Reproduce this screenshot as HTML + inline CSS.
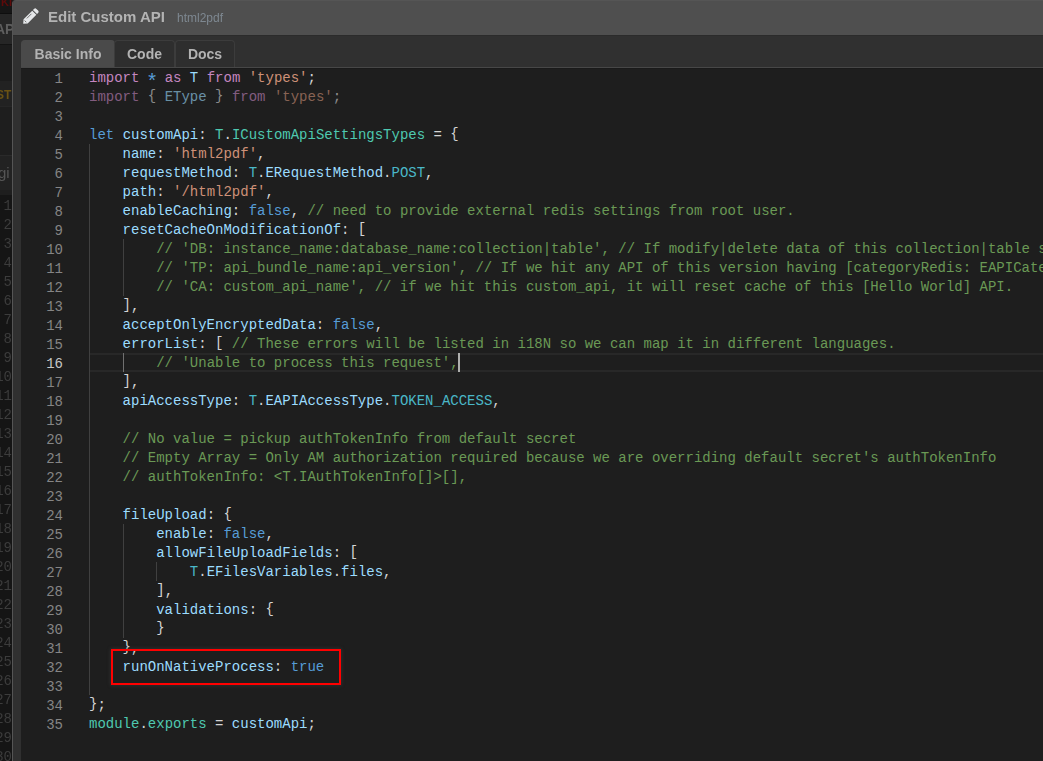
<!DOCTYPE html>
<html><head><meta charset="utf-8">
<style>
html,body{margin:0;padding:0;}
body{width:1043px;height:761px;overflow:hidden;position:relative;background:#1c1c1c;font-family:"Liberation Sans",sans-serif;}
#bg{position:absolute;left:0;top:0;width:12px;height:761px;background:#1c1c1c;overflow:hidden;filter:blur(0.4px);}
#bg div{position:absolute;left:0;width:12px;}
#bg .bln{font-family:"Liberation Mono",monospace;font-size:14px;line-height:19px;white-space:pre;color:#3c3c3c;text-align:right;width:12px;}
#modal{position:absolute;left:12px;top:0;width:1031px;height:761px;background:#303030;border-left:1px solid #555555;box-sizing:border-box;border-top-left-radius:4px;overflow:hidden;}
#hdr{position:absolute;left:0;top:0;right:0;height:35px;background:#4f4f4f;border-bottom:1px solid #2b2b2b;box-shadow:inset 0 1px 0 #555555;will-change:transform;}
#title{position:absolute;left:35px;top:8px;font-size:15px;font-weight:bold;color:#b3b3b3;white-space:nowrap;}
#sub{position:absolute;left:164px;top:11px;font-size:12px;color:#7e8891;white-space:nowrap;}
#pencil{position:absolute;left:-13px;top:0;}
.tab{position:absolute;top:40px;height:28px;box-sizing:border-box;border:1px solid #3c3c3c;border-bottom:none;border-radius:4px 4px 0 0;background:#2e2e2e;color:#b3b3b3;font-size:14px;font-weight:bold;text-align:center;line-height:27px;will-change:transform;}
#tbline{position:absolute;left:8px;right:0;top:67px;height:1px;background:#474747;}
#editor{position:absolute;left:8px;top:68px;right:0;bottom:0;background:#1e1e1e;overflow:hidden;}
#editor .shade{position:absolute;left:0;right:0;top:0;height:1px;background:#1a1a1a;}
.ln{position:absolute;left:0;top:2px;width:42px;text-align:right;color:#858585;}
.code{font-family:"Liberation Mono",monospace;font-size:14px;line-height:19px;white-space:pre;}
.row{position:absolute;left:0;right:0;height:19px;}
.tx{position:absolute;left:68px;top:1px;color:#d4d4d4;}
.dim .tx{opacity:.6}
.cur .hl{position:absolute;left:69px;right:0;top:0;height:19px;box-sizing:border-box;border-top:2px solid #282828;border-bottom:2px solid #282828;}
.cur .ln{color:#c6c6c6}
.g{position:absolute;width:1px;background:#404040;}
.ga{background:#707070;}
#caret{position:absolute;left:437px;top:285px;width:2px;height:19px;background:#aeafad;}
#redbox{position:absolute;left:90px;top:581px;width:230px;height:36px;box-sizing:border-box;border:2px solid #ff0000;box-shadow:0 0 3px 1px rgba(70,70,70,.35);}
.br{position:relative;top:-1px}
.k{color:#c586c0}.s{color:#ce9178}.b{color:#569cd6}.v{color:#9cdcfe}.t{color:#4ec9b0}.c{color:#6a9955}.e{color:#4fc1ff}.n{color:#4ab8c8}.a{color:#569cd6;display:inline-block;transform-origin:50% 4.4px;transform:translateY(2.5px) scale(1.45);}.p{color:#d4d4d4}
</style></head><body>
<div id="bg">
  <div style="top:0;height:13px;background:#161616;"></div>
  <div style="top:-5px;left:1px;width:30px;font-size:11px;font-weight:bold;color:#5e0a0a;line-height:14px;">KI</div>
  <div style="top:13px;height:1px;background:#0e0e0e;"></div>
  <div style="top:14px;height:30px;background:#262626;"></div>
  <div style="top:22px;left:-5px;width:30px;font-size:14px;font-weight:bold;color:#5e5e5e;line-height:14px;">AP</div>
  <div style="top:44px;height:1px;background:#141414;"></div>
  <div style="top:45px;height:36px;background:#1c1c1c;"></div>
  <div style="top:81px;height:25px;background:#222222;"></div>
  <div style="top:89px;left:-4px;width:30px;font-size:12px;font-weight:bold;color:#6a5214;line-height:12px;">ST</div>
  <div style="top:106px;height:49px;background:#1e1e1e;"></div>
  <div style="top:106px;height:1px;background:#262626;"></div>
  <div style="top:155px;height:1px;background:#2a2a2a;"></div>
  <div style="top:156px;height:34px;background:#222222;"></div>
  <div style="top:163px;left:-2px;width:30px;font-size:15px;color:#555555;line-height:20px;">gi</div>
  <div style="top:190px;height:5px;background:#1e1e1e;"></div>
  <div style="top:195px;height:566px;background:#151515;"></div>
  <div class="bln" style="top:197px;left:-6px;width:18px;">1
2
3
4
5
6
7
8
9
10
11
12
13
14
15
16
17
18
19
20
21
22
23
24
25
26
27
28
29
30</div>
</div>
<div id="modal">
  <div id="hdr">
    <svg id="pencil" width="60" height="35" viewBox="0 0 60 35"><g transform="translate(23.2,23.8) rotate(-45)"><path d="M0 0 L3.4 -2.9 L15.7 -2.9 L15.7 2.9 L3.4 2.9 Z M16.6 -2.9 L18.2 -2.9 Q19.9 -2.9 19.9 -1.2 L19.9 1.2 Q19.9 2.9 18.2 2.9 L16.6 2.9 Z" fill="#e6e8ea"/><path d="M6.4 -1.25 L12.9 -1.25 M3.3 -1.3 L3.3 1.1" stroke="#6a6a6a" stroke-width="0.9"/></g></svg>
    <div id="title">Edit Custom API</div>
    <div id="sub">html2pdf</div>
  </div>
  <div class="tab" style="left:8px;width:94px;background:#4a4a4a;border-color:#4a4a4a;">Basic Info</div>
  <div class="tab" style="left:101px;width:61px;">Code</div>
  <div class="tab" style="left:162px;width:60px;">Docs</div>
  <div id="tbline"></div>
  <div id="editor" class="code">
<div class="shade"></div>
<div class="row" style="top:0px"><span class="ln">1</span><span class="tx"><span class="k">import</span> <span class="a">*</span> <span class="k">as</span> <span class="v">T</span> <span class="k">from</span> <span class="s">'types'</span>;</span></div>
<div class="row dim" style="top:19px"><span class="ln">2</span><span class="tx"><span class="k">import</span> <span class="br">{</span> <span class="v">EType</span> <span class="br">}</span> <span class="k">from</span> <span class="s">'types'</span>;</span></div>
<div class="row" style="top:38px"><span class="ln">3</span><span class="tx"></span></div>
<div class="row" style="top:57px"><span class="ln">4</span><span class="tx"><span class="b">let</span> <span class="v">customApi</span>: <span class="t">T</span>.<span class="t">ICustomApiSettingsTypes</span> = <span class="br">{</span></span></div>
<div class="row" style="top:76px"><span class="ln">5</span><span class="tx">    <span class="v">name</span>: <span class="s">'html2pdf'</span>,</span></div>
<div class="row" style="top:95px"><span class="ln">6</span><span class="tx">    <span class="v">requestMethod</span>: <span class="n">T</span>.<span class="v">ERequestMethod</span>.<span class="n">POST</span>,</span></div>
<div class="row" style="top:114px"><span class="ln">7</span><span class="tx">    <span class="v">path</span>: <span class="s">'/html2pdf'</span>,</span></div>
<div class="row" style="top:133px"><span class="ln">8</span><span class="tx">    <span class="v">enableCaching</span>: <span class="b">false</span>, <span class="c">// need to provide external redis settings from root user.</span></span></div>
<div class="row" style="top:152px"><span class="ln">9</span><span class="tx">    <span class="v">resetCacheOnModificationOf</span>: <span class="br">[</span></span></div>
<div class="row" style="top:171px"><span class="ln">10</span><span class="tx">        <span class="c">// 'DB: instance_name:database_name:collection|table', // If modify|delete data of this collection|table settings</span></span></div>
<div class="row" style="top:190px"><span class="ln">11</span><span class="tx">        <span class="c">// 'TP: api_bundle_name:api_version', // If we hit any API of this version having [categoryRedis: EAPICategory]</span></span></div>
<div class="row" style="top:209px"><span class="ln">12</span><span class="tx">        <span class="c">// 'CA: custom_api_name', // if we hit this custom_api, it will reset cache of this [Hello World] API.</span></span></div>
<div class="row" style="top:228px"><span class="ln">13</span><span class="tx">    <span class="br">]</span>,</span></div>
<div class="row" style="top:247px"><span class="ln">14</span><span class="tx">    <span class="v">acceptOnlyEncryptedData</span>: <span class="b">false</span>,</span></div>
<div class="row" style="top:266px"><span class="ln">15</span><span class="tx">    <span class="v">errorList</span>: <span class="br">[</span> <span class="c">// These errors will be listed in i18N so we can map it in different languages.</span></span></div>
<div class="row cur" style="top:285px"><div class="hl"></div><span class="ln">16</span><span class="tx">        <span class="c">// 'Unable to process this request',</span></span></div>
<div class="row" style="top:304px"><span class="ln">17</span><span class="tx">    <span class="br">]</span>,</span></div>
<div class="row" style="top:323px"><span class="ln">18</span><span class="tx">    <span class="v">apiAccessType</span>: <span class="n">T</span>.<span class="v">EAPIAccessType</span>.<span class="n">TOKEN_ACCESS</span>,</span></div>
<div class="row" style="top:342px"><span class="ln">19</span><span class="tx"></span></div>
<div class="row" style="top:361px"><span class="ln">20</span><span class="tx">    <span class="c">// No value = pickup authTokenInfo from default secret</span></span></div>
<div class="row" style="top:380px"><span class="ln">21</span><span class="tx">    <span class="c">// Empty Array = Only AM authorization required because we are overriding default secret's authTokenInfo</span></span></div>
<div class="row" style="top:399px"><span class="ln">22</span><span class="tx">    <span class="c">// authTokenInfo: &lt;T.IAuthTokenInfo[]&gt;[],</span></span></div>
<div class="row" style="top:418px"><span class="ln">23</span><span class="tx"></span></div>
<div class="row" style="top:437px"><span class="ln">24</span><span class="tx">    <span class="v">fileUpload</span>: <span class="br">{</span></span></div>
<div class="row" style="top:456px"><span class="ln">25</span><span class="tx">        <span class="v">enable</span>: <span class="b">false</span>,</span></div>
<div class="row" style="top:475px"><span class="ln">26</span><span class="tx">        <span class="v">allowFileUploadFields</span>: <span class="br">[</span></span></div>
<div class="row" style="top:494px"><span class="ln">27</span><span class="tx">            <span class="n">T</span>.<span class="v">EFilesVariables</span>.<span class="v">files</span>,</span></div>
<div class="row" style="top:513px"><span class="ln">28</span><span class="tx">        <span class="br">]</span>,</span></div>
<div class="row" style="top:532px"><span class="ln">29</span><span class="tx">        <span class="v">validations</span>: <span class="br">{</span></span></div>
<div class="row" style="top:551px"><span class="ln">30</span><span class="tx">        <span class="br">}</span></span></div>
<div class="row" style="top:570px"><span class="ln">31</span><span class="tx">    <span class="br">}</span>,</span></div>
<div class="row" style="top:589px"><span class="ln">32</span><span class="tx">    <span class="v">runOnNativeProcess</span>: <span class="b">true</span></span></div>
<div class="row" style="top:608px"><span class="ln">33</span><span class="tx"></span></div>
<div class="row" style="top:627px"><span class="ln">34</span><span class="tx"><span class="br">}</span>;</span></div>
<div class="row" style="top:646px"><span class="ln">35</span><span class="tx"><span class="t">module</span>.<span class="t">exports</span> = <span class="v">customApi</span>;</span></div>
<div class="g" style="left:68px;top:76px;height:551px"></div>
<div class="g" style="left:102px;top:171px;height:57px"></div>
<div class="g ga" style="left:102px;top:285px;height:19px"></div>
<div class="g" style="left:102px;top:456px;height:114px"></div>
<div class="g" style="left:135px;top:494px;height:19px"></div>
<div id="caret"></div>
<div id="redbox"></div>
<!--/editor--><!--/editor--><!--/editor--><!--/editor--><!--/editor-->
  </div>
</div>
</body></html>
